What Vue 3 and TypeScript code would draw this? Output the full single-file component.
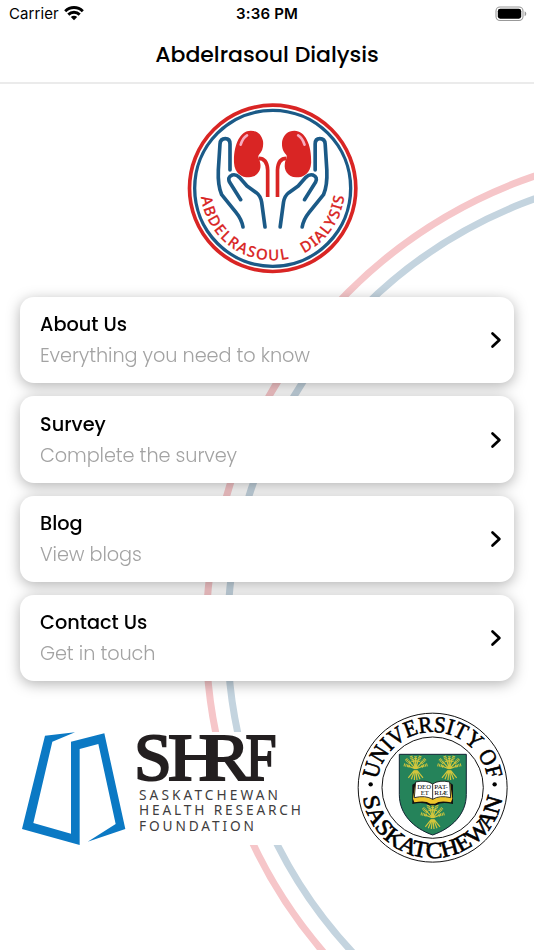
<template>
  <div class="screen">
    <svg class="rings" viewBox="0 0 534 950" fill="none" stroke-width="7">
      <circle cx="691.5" cy="635.5" r="485.5" stroke="#f6c6c9" />
      <circle cx="691.5" cy="635.5" r="464" stroke="#c4d4df" />
    </svg>

    <header class="header">
      <div class="status-bar">
        <div class="status-left">
          <span class="carrier">Carrier</span>
          <svg class="wifi" viewBox="0 0 20 15">
            <g fill="none" stroke="#000" stroke-width="2.9">
              <path d="M1.2 5.2C6.2 .3 13.8 .3 18.8 5.2" />
              <path d="M4.3 8.6C7.5 5.5 12.5 5.5 15.7 8.6" />
            </g>
            <path d="M6.8 10.9C8.7 9.2 11.3 9.2 13.2 10.9L10 14.3Z" />
          </svg>
        </div>
        <span class="time">3:36 PM</span>
        <div class="status-right">
          <svg class="battery" viewBox="0 0 32 16">
            <rect x="1" y="1" width="27" height="13.5" rx="4" fill="none" stroke="#999" stroke-width="1.1" />
            <rect x="2.8" y="2.8" width="23.4" height="9.9" rx="2.4" />
            <path d="M29.6 5.3Q31.3 6 31.3 7.8T29.6 10.2Z" fill="#999" />
          </svg>
        </div>
      </div>
      <h1 class="title">Abdelrasoul Dialysis</h1>
    </header>

    <main class="content">
      <svg class="logo" viewBox="0 0 558 558">
        <defs>
          <path id="logo-arc" d="M62 280A216 216 0 0 0 494 280" />
          <g id="logo-half" fill="none" stroke-linecap="round" stroke-linejoin="round">
            <g stroke="#1b5a87" stroke-width="11">
              <path d="M150 225V147Q150 131 136 131Q121 131 120 147L115 225Q113 272 125 299L168 352Q185 373 189 396" />
              <path d="M182 314L149 262Q141 246 157 240Q168 237 178 247L201 273L229 293Q242 303 245 322L255 396" />
            </g>
            <path d="M212 107C180 107 160 150 162 203C164 235 184 247 207 247C233 245 244 226 241 206C239 191 231 187 237 179C248 169 251 153 249 138C244 118 232 107 212 107Z" fill="#d92524" />
            <path d="M236 190C256 190 262 204 263 225V306" stroke="#d92524" stroke-width="11" stroke-linecap="butt" />
            <path d="M182 149Q188 129 201 121" stroke="#f7adc0" stroke-width="8" />
          </g>
        </defs>
        <circle cx="278" cy="280" r="255" fill="#fff" />
        <circle cx="278" cy="280" r="249.5" fill="none" stroke="#d92524" stroke-width="11" />
        <circle cx="278" cy="280" r="234" fill="none" stroke="#1b5a87" stroke-width="10" />
        <use href="#logo-half" />
        <use href="#logo-half" transform="translate(555.5 0) scale(-1 1)" />
        <text class="logo-text" textLength="362"><textPath href="#logo-arc" startOffset="26">ABDELRASOUL</textPath></text>
        <text class="logo-text" textLength="218"><textPath href="#logo-arc" startOffset="436">DIALYSIS</textPath></text>
      </svg>

      <ul class="menu">
        <li v-for="item in items" :key="item.title" class="card">
          <div class="card-body">
            <h2 class="card-title">{{ item.title }}</h2>
            <p class="card-subtitle">{{ item.subtitle }}</p>
          </div>
          <svg class="chevron" viewBox="0 0 12 18">
            <path d="M2.5 2.4L9.4 9L2.5 15.6" />
          </svg>
        </li>
      </ul>

      <footer class="partners">
        <svg class="shrf" viewBox="0 0 280 113">
          <rect width="280" height="113" fill="#fff" />
          <path
            transform="translate(-7 -7) scale(.33333)"
            fill="#0b79c4"
            d="M180 22L90 32L21 312L194 360V72L250 57L302 297L218 350L331 312L268 25L168 50V326L55 294L112 50Z"
          />
          <!-- H and R share one stem -->
          <g class="shrf-name">
            <text x="112" y="47.5">S</text>
            <text x="146" y="47.5" textLength="55" lengthAdjust="spacingAndGlyphs">H</text>
            <text x="179.5" y="47.5" textLength="49" lengthAdjust="spacingAndGlyphs">R</text>
            <text x="223.5" y="47.5" textLength="31" lengthAdjust="spacingAndGlyphs">F</text>
          </g>
          <g class="shrf-sub">
            <text x="117" y="67.5" textLength="139">SASKATCHEWAN</text>
            <text x="117" y="83" textLength="162">HEALTH RESEARCH</text>
            <text x="117" y="98.7" textLength="115">FOUNDATION</text>
          </g>
        </svg>

        <svg class="usask" viewBox="22 22 454 454">
          <defs>
            <path id="arc-top" d="M82 249A167 167 0 0 1 416 249" />
            <path id="arc-bottom" d="M38 249A211 211 0 0 0 460 249" />
            <g id="sheaf">
              <g fill="none" stroke="#d3c63c" stroke-width="3.5">
                <path d="M-22 32L0 4L22 32M-13 36L0 2L13 36M-4 38L0 0L4 38" />
                <path d="M0 5L-20 -17M0 5L-9 -26M0 5V-30M0 5L9 -26M0 5L20 -17M0 5L-25 -5M0 5L25 -5" />
              </g>
              <g fill="none" stroke="#d3c63c" stroke-width="9" stroke-dasharray="3 2">
                <path d="M-17 -12L-29 -25M-8 -17L-14 -34M0 -15V-33M8 -17L14 -34M17 -12L29 -25M-18 -3L-36 -8M18 -3L36 -8" />
              </g>
              <path d="M-12 7H12" stroke="#237d52" stroke-width="3" />
            </g>
          </defs>
          <circle cx="249" cy="249" r="223.5" fill="#fff" stroke="#111" stroke-width="3" />
          <circle cx="249" cy="249" r="152" fill="none" stroke="#111" stroke-width="3" />
          <text class="seal-text" textLength="474" lengthAdjust="spacingAndGlyphs"><textPath href="#arc-top" startOffset="25">UNIVERSITY OF</textPath></text>
          <text class="seal-text" textLength="602" lengthAdjust="spacingAndGlyphs"><textPath href="#arc-bottom" startOffset="29">SASKATCHEWAN</textPath></text>
          <circle cx="63" cy="239" r="6.5" />
          <circle cx="435" cy="239" r="6.5" />
          <path d="M149 149H350V270C350 328 307 371 249 391C191 371 149 328 149 270Z" fill="#25835a" stroke="#123" stroke-width="3" />
          <use href="#sheaf" x="198" y="188" />
          <use href="#sheaf" x="299" y="188" />
          <use href="#sheaf" x="249" y="335" />
          <path d="M188 240L188 298Q224 291 238 302H260Q274 291 310 298L310 240L302 234V286L249 292L198 286V234Z" fill="#111" />
          <path d="M190 282L197 238H302L308 282L304 293Q270 286 256 297H242Q228 286 194 293Z" fill="#f0c62c" />
          <path d="M198 232Q230 225 249 238Q268 225 300 232L303 279Q270 271 249 284Q228 271 194 279Z" fill="#fff" stroke="#111" stroke-width="2.5" />
          <path d="M249 238V284" stroke="#111" stroke-width="2.5" />
          <g class="book-text">
            <text x="203" y="252" textLength="41" lengthAdjust="spacingAndGlyphs">DEO</text>
            <text x="213" y="270" textLength="24" lengthAdjust="spacingAndGlyphs">ET</text>
            <text x="254" y="252" textLength="41" lengthAdjust="spacingAndGlyphs">PAT-</text>
            <text x="254" y="270" textLength="41" lengthAdjust="spacingAndGlyphs">RIÆ</text>
          </g>
        </svg>
      </footer>
    </main>
  </div>
</template>

<script setup lang="ts">
interface MenuItem {
  title: string
  subtitle: string
}

const items: MenuItem[] = [
  { title: 'About Us', subtitle: 'Everything you need to know' },
  { title: 'Survey', subtitle: 'Complete the survey' },
  { title: 'Blog', subtitle: 'View blogs' },
  { title: 'Contact Us', subtitle: 'Get in touch' }
]
</script>

<style>
body {
  margin: 0;
  background: #fff;
}
</style>

<style scoped>
.screen {
  position: relative;
  width: 534px;
  height: 950px;
  overflow: hidden;
  background: #fff;
  font-family: Poppins, Inter, sans-serif;
  color: #000;
}

.rings {
  position: absolute;
  inset: 0;
  width: 534px;
  height: 950px;
}

svg {
  display: block;
}

.header {
  position: relative;
  box-sizing: border-box;
  height: 84px;
  border-bottom: 2px solid #ebebeb;
}

.status-bar {
  display: grid;
  grid-template-columns: 1fr auto 1fr;
  align-items: center;
  height: 27px;
  padding: 0 7px 0 9px;
  font-family: Inter, sans-serif;
  font-size: 15px;
}

.status-left {
  display: flex;
  align-items: center;
  gap: 5px;
}

.carrier {
  letter-spacing: 0.1px;
}

.wifi {
  width: 20px;
  height: 15px;
}

.time {
  margin-right: 2px;
  font-weight: 600;
  letter-spacing: 0.2px;
}

.status-right {
  display: flex;
  justify-content: flex-end;
}

.battery {
  width: 32px;
  height: 16px;
}

.title {
  margin: 10px 0 0;
  font-size: 22px;
  font-weight: 500;
  line-height: 36px;
  text-align: center;
}

.content {
  position: relative;
  display: flex;
  flex-direction: column;
}

.logo {
  width: 186px;
  height: 186px;
  margin: 11px 0 0 180px;
}

.logo-text {
  font-family: 'Noto Sans', sans-serif;
  font-size: 45px;
  font-weight: 500;
  fill: #d92524;
  stroke: #d92524;
  stroke-width: 0.6;
}

.menu {
  display: flex;
  flex-direction: column;
  gap: 13px;
  margin: 16px 20px 0;
  padding: 0;
  list-style: none;
  filter: drop-shadow(0 3px 7px rgba(0, 0, 0, 0.3));
}

.card {
  display: flex;
  align-items: center;
  justify-content: space-between;
  box-sizing: border-box;
  height: 86.33px;
  padding: 0 12px 0 20px;
  border-radius: 14px;
  background: #fff;
}

.card-body {
  padding-top: 1.6px;
}

.card-title,
.card-subtitle {
  margin: 0;
  font-size: 19.3px;
  font-weight: 500;
  line-height: 30px;
}

.card-subtitle {
  margin-top: 1px;
  font-weight: 300;
  letter-spacing: -0.1px;
  color: #a3a3a3;
}

.chevron {
  width: 12px;
  height: 18px;
  margin-top: 0.6px;
  fill: none;
  stroke: #000;
  stroke-width: 2.7;
  stroke-linecap: round;
  stroke-linejoin: round;
}

.partners {
  display: flex;
  align-items: flex-start;
  justify-content: space-between;
  margin: 31px 25.5px 0 22px;
}

.shrf {
  width: 280px;
  height: 113px;
  margin-top: 20px;
}

.shrf-name {
  font-family: 'Liberation Serif', serif;
  font-size: 68px;
  fill: #231f20;
  stroke: #231f20;
  stroke-width: 2.2;
}

.shrf-sub {
  font-family: 'Noto Sans', sans-serif;
  font-size: 13.7px;
  fill: #403d3e;
}

.usask {
  width: 151.3px;
  height: 151.3px;
}

.seal-text {
  font-family: 'Liberation Serif', serif;
  font-size: 69px;
  fill: #000;
  stroke: #000;
  stroke-width: 1.8;
}

.book-text {
  font-family: 'Liberation Serif', serif;
  font-size: 21px;
}
</style>
